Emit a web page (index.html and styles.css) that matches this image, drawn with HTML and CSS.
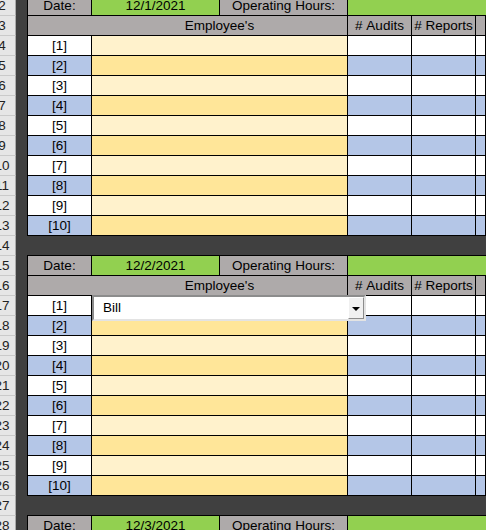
FILE: index.html
```html
<!DOCTYPE html>
<html lang="en">
<head>
  <meta charset="UTF-8">
  <meta name="viewport" content="width=device-width, initial-scale=1.0">
  <title>Daily Audits</title>
  <link rel="stylesheet" href="styles.css">
</head>
<body>
  <div class="sheet">
    <!-- block: 12/1/2021 -->
    <div class="row">
      <div class="rh">2</div><div class="gutter"></div>
      <div class="c first gray">Date:</div>
      <div class="c green">12/1/2021</div>
      <div class="c gray">Operating Hours:</div>
      <div class="c green span3"></div>
    </div>
    <div class="row">
      <div class="rh">3</div><div class="gutter"></div>
      <div class="c first gray no-right"></div>
      <div class="c gray span2">Employee's</div>
      <div class="c gray">#&nbsp;Audits</div>
      <div class="c gray">#&nbsp;Reports</div>
      <div class="c gray"></div>
    </div>
    <div class="row odd">
      <div class="rh">4</div><div class="gutter"></div>
      <div class="c first">[1]</div><div class="c name span2"></div><div class="c"></div><div class="c"></div><div class="c"></div>
    </div>
    <div class="row even">
      <div class="rh">5</div><div class="gutter"></div>
      <div class="c first">[2]</div><div class="c name span2"></div><div class="c"></div><div class="c"></div><div class="c"></div>
    </div>
    <div class="row odd">
      <div class="rh">6</div><div class="gutter"></div>
      <div class="c first">[3]</div><div class="c name span2"></div><div class="c"></div><div class="c"></div><div class="c"></div>
    </div>
    <div class="row even">
      <div class="rh">7</div><div class="gutter"></div>
      <div class="c first">[4]</div><div class="c name span2"></div><div class="c"></div><div class="c"></div><div class="c"></div>
    </div>
    <div class="row odd">
      <div class="rh">8</div><div class="gutter"></div>
      <div class="c first">[5]</div><div class="c name span2"></div><div class="c"></div><div class="c"></div><div class="c"></div>
    </div>
    <div class="row even">
      <div class="rh">9</div><div class="gutter"></div>
      <div class="c first">[6]</div><div class="c name span2"></div><div class="c"></div><div class="c"></div><div class="c"></div>
    </div>
    <div class="row odd">
      <div class="rh">10</div><div class="gutter"></div>
      <div class="c first">[7]</div><div class="c name span2"></div><div class="c"></div><div class="c"></div><div class="c"></div>
    </div>
    <div class="row even">
      <div class="rh">11</div><div class="gutter"></div>
      <div class="c first">[8]</div><div class="c name span2"></div><div class="c"></div><div class="c"></div><div class="c"></div>
    </div>
    <div class="row odd">
      <div class="rh">12</div><div class="gutter"></div>
      <div class="c first">[9]</div><div class="c name span2"></div><div class="c"></div><div class="c"></div><div class="c"></div>
    </div>
    <div class="row even">
      <div class="rh">13</div><div class="gutter"></div>
      <div class="c first">[10]</div><div class="c name span2"></div><div class="c"></div><div class="c"></div><div class="c"></div>
    </div>
    <div class="row">
      <div class="rh">14</div><div class="gutter"></div>
      <div class="spacer"></div>
    </div>

    <!-- block: 12/2/2021 -->
    <div class="row">
      <div class="rh">15</div><div class="gutter"></div>
      <div class="c first gray">Date:</div>
      <div class="c green">12/2/2021</div>
      <div class="c gray">Operating Hours:</div>
      <div class="c green span3"></div>
    </div>
    <div class="row">
      <div class="rh">16</div><div class="gutter"></div>
      <div class="c first gray no-right"></div>
      <div class="c gray span2">Employee's</div>
      <div class="c gray">#&nbsp;Audits</div>
      <div class="c gray">#&nbsp;Reports</div>
      <div class="c gray"></div>
    </div>
    <div class="row odd">
      <div class="rh">17</div><div class="gutter"></div>
      <div class="c first">[1]</div>
      <div class="c name span2 has-combo">
        <div class="combo">
          <span class="combo-text">Bill</span>
          <span class="combo-btn"><span class="arrow"></span></span>
        </div>
      </div>
      <div class="c"></div><div class="c"></div><div class="c"></div>
    </div>
    <div class="row even">
      <div class="rh">18</div><div class="gutter"></div>
      <div class="c first">[2]</div><div class="c name span2"></div><div class="c"></div><div class="c"></div><div class="c"></div>
    </div>
    <div class="row odd">
      <div class="rh">19</div><div class="gutter"></div>
      <div class="c first">[3]</div><div class="c name span2"></div><div class="c"></div><div class="c"></div><div class="c"></div>
    </div>
    <div class="row even">
      <div class="rh">20</div><div class="gutter"></div>
      <div class="c first">[4]</div><div class="c name span2"></div><div class="c"></div><div class="c"></div><div class="c"></div>
    </div>
    <div class="row odd">
      <div class="rh">21</div><div class="gutter"></div>
      <div class="c first">[5]</div><div class="c name span2"></div><div class="c"></div><div class="c"></div><div class="c"></div>
    </div>
    <div class="row even">
      <div class="rh">22</div><div class="gutter"></div>
      <div class="c first">[6]</div><div class="c name span2"></div><div class="c"></div><div class="c"></div><div class="c"></div>
    </div>
    <div class="row odd">
      <div class="rh">23</div><div class="gutter"></div>
      <div class="c first">[7]</div><div class="c name span2"></div><div class="c"></div><div class="c"></div><div class="c"></div>
    </div>
    <div class="row even">
      <div class="rh">24</div><div class="gutter"></div>
      <div class="c first">[8]</div><div class="c name span2"></div><div class="c"></div><div class="c"></div><div class="c"></div>
    </div>
    <div class="row odd">
      <div class="rh">25</div><div class="gutter"></div>
      <div class="c first">[9]</div><div class="c name span2"></div><div class="c"></div><div class="c"></div><div class="c"></div>
    </div>
    <div class="row even">
      <div class="rh">26</div><div class="gutter"></div>
      <div class="c first">[10]</div><div class="c name span2"></div><div class="c"></div><div class="c"></div><div class="c"></div>
    </div>
    <div class="row">
      <div class="rh">27</div><div class="gutter"></div>
      <div class="spacer"></div>
    </div>

    <!-- block: 12/3/2021 -->
    <div class="row">
      <div class="rh">28</div><div class="gutter"></div>
      <div class="c first gray">Date:</div>
      <div class="c green">12/3/2021</div>
      <div class="c gray">Operating Hours:</div>
      <div class="c green span3"></div>
    </div>
  </div>
</body>
</html>
```

FILE: styles.css
```css
/* Sheet basics */
html, body {
  margin: 0;
  padding: 0;
  overflow: hidden;
  background-color: #404040;
}
.sheet {
  width: 497px;
  margin: -4px 0 0 -11px;
  font-family: "Liberation Sans", Arial, sans-serif;
  font-size: 13.5px;
  color: #000;
}
.row {
  display: grid;
  grid-template-columns: 27px 11px 65px 128px 128px 64px 64px 1fr;
  height: 20px;
  background-color: #404040;
}

/* Row headers */
.rh {
  box-sizing: border-box;
  background-color: #e6e6e6;
  border-right: 1px solid #ababab;
  border-bottom: 1px solid #cacaca;
  color: #222;
  text-align: center;
  line-height: 19px;
}
.gutter {
  background-color: #404040;
}

/* Cells */
.c {
  box-sizing: border-box;
  border-right: 1px solid #000;
  border-bottom: 1px solid #000;
  background-color: #fff;
  text-align: center;
  line-height: 19px;
  white-space: nowrap;
}
.c.first {
  border-left: 1px solid #000;
}
.c.no-right {
  border-right: none;
}
.span2 {
  grid-column: span 2;
}
.span3 {
  grid-column: span 3;
  border-right: none;
}
.gray {
  background-color: #aeaaaa;
}
.green {
  background-color: #92d050;
}
.odd .name {
  background-color: #fff2cc;
}
.even .c {
  background-color: #b4c6e7;
}
.even .name {
  background-color: #ffe699;
}
.spacer {
  grid-column: span 6;
  border-bottom: 1px solid #000;
}

/* Validation dropdown */
.has-combo {
  position: relative;
}
.combo {
  position: absolute;
  left: 0;
  top: -1px;
  z-index: 2;
  box-sizing: border-box;
  width: 274px;
  height: 26px;
  background-color: #fff;
  border-top: 2px solid #8c8c8c;
  border-left: 2px solid #8c8c8c;
  border-right: 2px solid #e3e3e3;
  border-bottom: 2px solid #e3e3e3;
  text-align: left;
}
.combo-text {
  display: block;
  padding-left: 9px;
  line-height: 22px;
}
.combo-btn {
  position: absolute;
  right: 0;
  top: 0;
  box-sizing: border-box;
  width: 16px;
  height: 22px;
  background-color: #f0f0f0;
  border-top: 1px solid #fff;
  border-left: 1px solid #fff;
  border-right: 1px solid #8c8c8c;
  border-bottom: 1px solid #8c8c8c;
}
.arrow {
  position: absolute;
  left: 3px;
  top: 9px;
  width: 0;
  height: 0;
  border-left: 4px solid transparent;
  border-right: 4px solid transparent;
  border-top: 4px solid #000;
}
```
